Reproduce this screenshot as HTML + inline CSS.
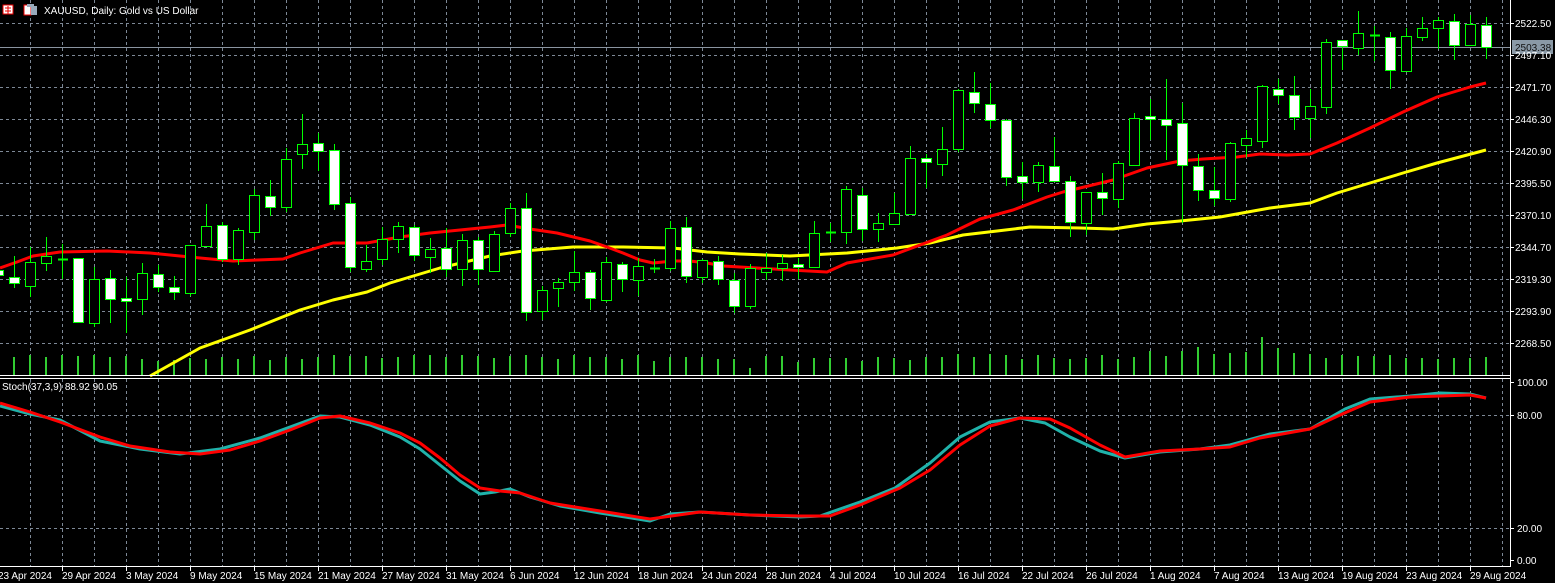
<!DOCTYPE html>
<html><head><meta charset="utf-8"><style>
html,body{margin:0;padding:0;background:#000;width:1555px;height:583px;overflow:hidden}
svg{display:block}
text{font-family:"Liberation Sans",sans-serif;font-size:10px;fill:#fff}
</style></head><body>
<svg id="s" width="1555" height="583" viewBox="0 0 1555 583" xmlns="http://www.w3.org/2000/svg" shape-rendering="crispEdges">
<rect width="1555" height="583" fill="#000"/>
<g id="grid"></g>
<g id="vol"></g>
<line x1="0" y1="47.5" x2="1510" y2="47.5" stroke="#8a94a0" stroke-width="1"/>
<g id="ma" shape-rendering="auto"></g>
<g id="cdl"></g>
<g id="st" shape-rendering="auto"></g>
<!-- borders -->
<line x1="0" y1="375.5" x2="1511" y2="375.5" stroke="#fff"/>
<line x1="0" y1="378.5" x2="1511" y2="378.5" stroke="#fff"/>
<line x1="0" y1="566.5" x2="1511" y2="566.5" stroke="#fff"/>
<line x1="1510.5" y1="0" x2="1510.5" y2="567" stroke="#fff"/>
<!-- header icons -->
<rect x="3" y="5" width="10" height="9" fill="#fff" stroke="#e00" stroke-width="1"/>
<line x1="5" y1="8" x2="11" y2="8" stroke="#e00"/><line x1="5" y1="11" x2="11" y2="11" stroke="#e00"/><line x1="8" y1="6" x2="8" y2="14" stroke="#e00"/>
<rect x="24" y="5" width="7" height="10" fill="#fff" stroke="#e00"/>
<rect x="31" y="6" width="6" height="9" fill="#9ab"/>
<rect x="27" y="4" width="7" height="3" fill="#9ab"/>
<text x="44" y="14" font-size="11">XAUUSD, Daily:  Gold vs US Dollar</text>
<text x="2" y="390" font-size="9.5">Stoch(37,3,9) 88.92 90.05</text>
<g id="ax"></g>
<rect x="1512" y="40" width="41" height="14" fill="#8a99a6"/>
<text x="1515" y="51" fill="#000" style="fill:#111">2503.38</text>
<g id="lbl">
<text x="1515" y="27">2522.50</text>
<text x="1515" y="59">2497.10</text>
<text x="1515" y="91">2471.70</text>
<text x="1515" y="123">2446.30</text>
<text x="1515" y="155">2420.90</text>
<text x="1515" y="187">2395.50</text>
<text x="1515" y="219">2370.10</text>
<text x="1515" y="251">2344.70</text>
<text x="1515" y="283">2319.30</text>
<text x="1515" y="315">2293.90</text>
<text x="1515" y="347">2268.50</text>
<text x="1517" y="386">100.00</text>
<text x="1517" y="419">80.00</text>
<text x="1517" y="532">20.00</text>
<text x="1517" y="564">0.00</text>
<text x="-2" y="579">23 Apr 2024</text>
<text x="62" y="579">29 Apr 2024</text>
<text x="126" y="579">3 May 2024</text>
<text x="190" y="579">9 May 2024</text>
<text x="254" y="579">15 May 2024</text>
<text x="318" y="579">21 May 2024</text>
<text x="382" y="579">27 May 2024</text>
<text x="446" y="579">31 May 2024</text>
<text x="510" y="579">6 Jun 2024</text>
<text x="574" y="579">12 Jun 2024</text>
<text x="638" y="579">18 Jun 2024</text>
<text x="702" y="579">24 Jun 2024</text>
<text x="766" y="579">28 Jun 2024</text>
<text x="830" y="579">4 Jul 2024</text>
<text x="894" y="579">10 Jul 2024</text>
<text x="958" y="579">16 Jul 2024</text>
<text x="1022" y="579">22 Jul 2024</text>
<text x="1086" y="579">26 Jul 2024</text>
<text x="1150" y="579">1 Aug 2024</text>
<text x="1214" y="579">7 Aug 2024</text>
<text x="1278" y="579">13 Aug 2024</text>
<text x="1342" y="579">19 Aug 2024</text>
<text x="1406" y="579">23 Aug 2024</text>
<text x="1470" y="579">29 Aug 2024</text>
</g>
</svg>
<script>
var NS="http://www.w3.org/2000/svg";
function el(p,t,a){var e=document.createElementNS(NS,t);for(var k in a)e.setAttribute(k,a[k]);document.getElementById(p).appendChild(e);return e;}
// grid
for(var x=30;x<1510;x+=32){el("grid","line",{x1:x+.5,y1:0,x2:x+.5,y2:375,stroke:"#7d8896","stroke-dasharray":"3,3"});el("grid","line",{x1:x+.5,y1:379,x2:x+.5,y2:566,stroke:"#7d8896","stroke-dasharray":"3,3"});}
[23,55,87,119,151,183,215,247,279,311,343].forEach(function(y){el("grid","line",{x1:0,y1:y+.5,x2:1510,y2:y+.5,stroke:"#7d8896","stroke-dasharray":"3,3"});});
[415,528].forEach(function(y){el("grid","line",{x1:0,y1:y+.5,x2:1510,y2:y+.5,stroke:"#7d8896","stroke-dasharray":"3,3"});});
// axis ticks
[23,55,87,119,151,183,215,247,279,311,343,382,415,528,560].forEach(function(y){el("ax","line",{x1:1510,y1:y+.5,x2:1514,y2:y+.5,stroke:"#fff"});});
for(var t=62;t<1510;t+=64)el("ax","line",{x1:t+.5,y1:566,x2:t+.5,y2:571,stroke:"#fff"});
// candles: [type w=white h=hollow d=doji, top, bottom, high, low]
var C=[
["w",270,275,262,282],
["w",277,283,256,288],["h",262,286,247,297],["h",256,263,237,271],["d",259,259,244,279],["w",258,322,258,323],
["h",279,323,267,327],["w",278,299,270,323],["w",298,301,277,333],["h",273,299,263,315],["w",274,287,265,292],
["w",287,292,276,300],["h",245,293,245,296],["h",226,246,204,247],["w",225,259,222,262],["h",230,259,228,265],
["h",195,232,189,240],["w",196,207,180,216],["h",159,207,148,212],["h",144,154,114,169],["w",143,151,133,171],
["w",150,204,144,210],["w",203,267,197,272],["h",261,269,245,272],["h",239,259,227,265],["h",226,239,222,253],
["w",227,255,225,261],["h",249,257,238,273],["w",248,269,228,277],["h",240,269,234,286],["w",240,269,237,285],
["h",234,271,231,272],["h",208,233,203,237],["w",208,312,193,321],["h",290,311,286,320],["h",282,288,278,307],
["h",272,282,251,291],["w",272,298,270,310],["h",262,300,257,302],["w",264,279,262,292],["h",266,280,258,296],
["d",268,268,259,273],["h",228,268,221,271],["w",227,276,217,283],["h",260,277,259,283],["w",261,279,256,285],
["w",280,306,273,313],["h",268,306,264,309],["h",268,272,253,280],["h",263,268,255,281],["w",264,267,258,279],
["h",233,267,221,268],["d",232,232,223,242],["h",189,232,186,244],["w",195,229,188,241],["h",223,229,213,242],
["h",213,224,193,224],["h",158,214,146,214],["w",158,162,154,188],["h",149,164,127,176],["h",90,149,89,152],
["w",92,103,72,113],["w",104,120,83,128],["w",120,177,119,186],["w",176,182,162,199],["h",165,182,162,192],
["w",166,181,137,181],["w",181,222,176,237],["h",192,223,192,235],["w",192,198,173,215],["h",163,199,161,208],
["h",118,165,113,165],["w",116,119,99,140],["w",119,125,79,160],["w",123,165,103,223],["w",166,190,154,201],
["w",190,198,167,206],["h",143,199,142,202],["h",138,145,130,157],["h",86,141,85,148],["w",89,95,79,104],
["w",95,117,76,130],["h",106,118,89,138],["h",42,107,39,114],["w",40,46,40,70],["h",33,48,11,55],
["d",35,35,26,61],["w",37,70,32,89],["h",36,71,28,71],["h",28,37,17,41],["h",20,28,17,49],
["w",21,45,14,60],["h",24,45,15,45],["w",25,47,17,59]];
var vh=[18,18,20,18,20,19,20,18,19,16,14,15,17,16,18,16,19,15,18,16,18,20,19,19,17,18,20,20,18,20,19,17,19,20,18,16,20,18,18,16,20,14,18,18,18,16,16,7,19,19,13,17,17,17,14,18,17,15,18,18,21,18,21,20,16,20,17,16,17,20,16,18,24,19,24,28,21,22,23,38,27,22,21,17,20,19,19,20,17,17,16,17,17,18];
C.forEach(function(c,i){var x=-2+16*i;
 if(vh[i])el("vol","rect",{x:x-1,y:375-vh[i],width:2,height:vh[i],fill:"#32cd32"});
 el("cdl","line",{x1:x+.5,y1:c[3],x2:x+.5,y2:c[4],stroke:"#00ff00"});
 if(c[0]=="d"){el("cdl","line",{x1:x-4,y1:c[1]+.5,x2:x+6,y2:c[1]+.5,stroke:"#00ff00","stroke-width":2});}
 else el("cdl","rect",{x:x-4.5,y:c[1]+.5,width:10,height:Math.max(c[2]-c[1],2),fill:c[0]=="w"?"#fff":"#000",stroke:"#00ff00"});
});
function pl(g,pts,col,w){el(g,"polyline",{points:pts.map(function(p){return p.join(",")}).join(" "),fill:"none",stroke:col,"stroke-width":w,"stroke-linejoin":"round"});}
pl("ma",[[150,376],[200,348],[250,330],[300,310],[333,300],[367,292],[390,283],[440,268],[490,256],[523,251],[573,247],[623,247],[673,248],[707,252],[740,254],[790,256],[847,253],[897,248],[930,243],[963,235],[997,231],[1030,227],[1080,228],[1113,229],[1147,224],[1180,221],[1220,217],[1270,208],[1310,203],[1337,193],[1370,183],[1403,173],[1437,163],[1486,150]],"#ffff00",3);
pl("ma",[[0,268],[17,262],[33,256],[60,252],[107,251],[150,253],[200,258],[233,261],[283,259],[300,253],[333,243],[367,243],[400,237],[430,233],[470,229],[490,227],[507,225],[530,229],[557,233],[590,241],[607,247],[623,253],[640,260],[653,263],[673,261],[690,261],[707,263],[723,266],[757,268],[790,270],[827,272],[847,263],[893,255],[920,245],[947,235],[980,219],[1013,210],[1047,197],[1063,192],[1080,188],[1113,180],[1147,168],[1180,161],[1203,159],[1237,157],[1260,154],[1287,155],[1310,154],[1337,143],[1370,128],[1403,112],[1437,97],[1470,87],[1486,83]],"#ff0000",3);
pl("st",[[0,406],[30,414],[60,420],[100,441],[140,449],[180,454],[220,449],[260,438],[290,427],[320,416],[340,417],[370,425],[400,437],[420,449],[440,465],[460,481],[480,494],[495,492],[510,489],[530,497],[560,506],[600,513],[650,521],[670,514],[700,512],[750,515],[800,517],[820,516],[860,502],[895,488],[930,463],[960,437],[990,422],[1020,418],[1045,423],[1070,437],[1100,451],[1125,458],[1160,452],[1200,449],[1230,445],[1270,434],[1310,429],[1345,409],[1370,399],[1410,396],[1440,393],[1470,394],[1486,398]],"#20b2aa",3);
pl("st",[[0,403],[30,412],[60,422],[100,437],[130,446],[170,452],[200,454],[230,450],[260,441],[290,430],[320,418],[340,416],[370,423],[400,433],[420,443],[440,458],[460,475],[480,488],[500,491],[520,493],[550,503],[600,511],[650,519],[700,512],[750,515],[800,516],[830,516],[860,505],[900,488],[930,470],[960,445],[990,426],[1020,418],[1050,419],[1070,428],[1100,445],[1125,457],[1160,451],[1200,449],[1230,447],[1260,438],[1310,429],[1340,415],[1370,402],[1410,397],[1440,396],[1470,395],[1486,398]],"#ff0000",3);
</script>
</body></html>
